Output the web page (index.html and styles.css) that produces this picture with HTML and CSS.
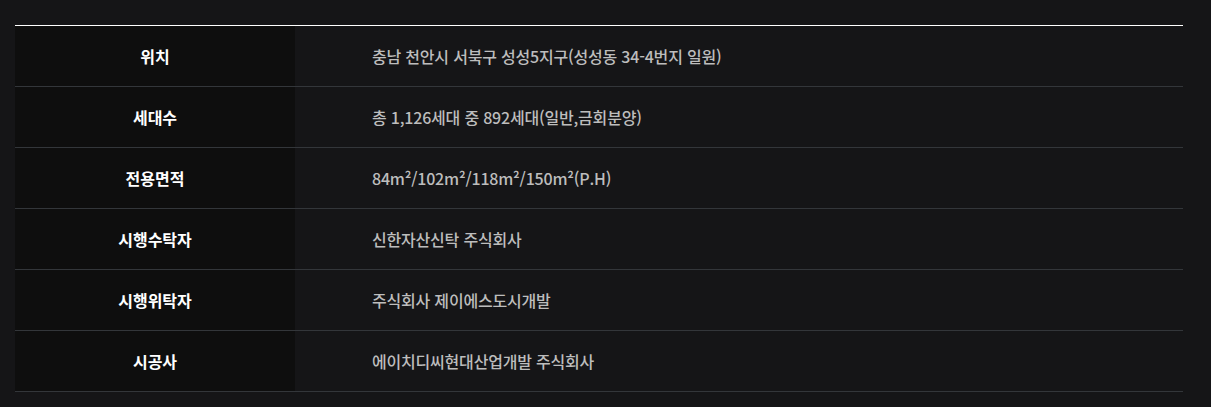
FILE: index.html
```html
<!DOCTYPE html>
<html lang="ko">
<head>
<meta charset="utf-8">
<link rel="stylesheet" href="styles.css">
</head>
<body>
<div class="wrap">
  <table class="info">
    <tbody>
      <tr><th>위치</th><td>충남 천안시 서북구 성성5지구(성성동 34-4번지 일원)</td></tr>
      <tr><th>세대수</th><td>총 1,126세대 중 892세대(일반,금회분양)</td></tr>
      <tr><th>전용면적</th><td>84m²/102m²/118m²/150m²(P.H)</td></tr>
      <tr><th>시행수탁자</th><td>신한자산신탁 주식회사</td></tr>
      <tr><th>시행위탁자</th><td>주식회사 제이에스도시개발</td></tr>
      <tr><th>시공사</th><td>에이치디씨현대산업개발 주식회사</td></tr>
    </tbody>
  </table>
</div>
</body>
</html>
```
FILE: styles.css
```css
html, body {
  margin: 0;
  padding: 0;
  background: #151517;
}
body {
  font-family: "Noto Sans CJK KR", "Noto Sans", sans-serif;
}
.wrap {
  padding: 25px 28px 0 15px;
}
.info {
  width: 100%;
  border-collapse: collapse;
  border-top: 1px solid #ffffff;
}
.info th, .info td {
  height: 60px;
  padding: 0;
  border-bottom: 1px solid #33363a;
  font-size: 16px;
  vertical-align: middle;
}
.info th {
  width: 280px;
  background: #0e0e0e;
  color: #ffffff;
  font-weight: 700;
  text-align: center;
}
.info td {
  padding-left: 77px;
  color: #bdbdbd;
  font-weight: 500;
  text-align: left;
  letter-spacing: -0.2px;
}
```
